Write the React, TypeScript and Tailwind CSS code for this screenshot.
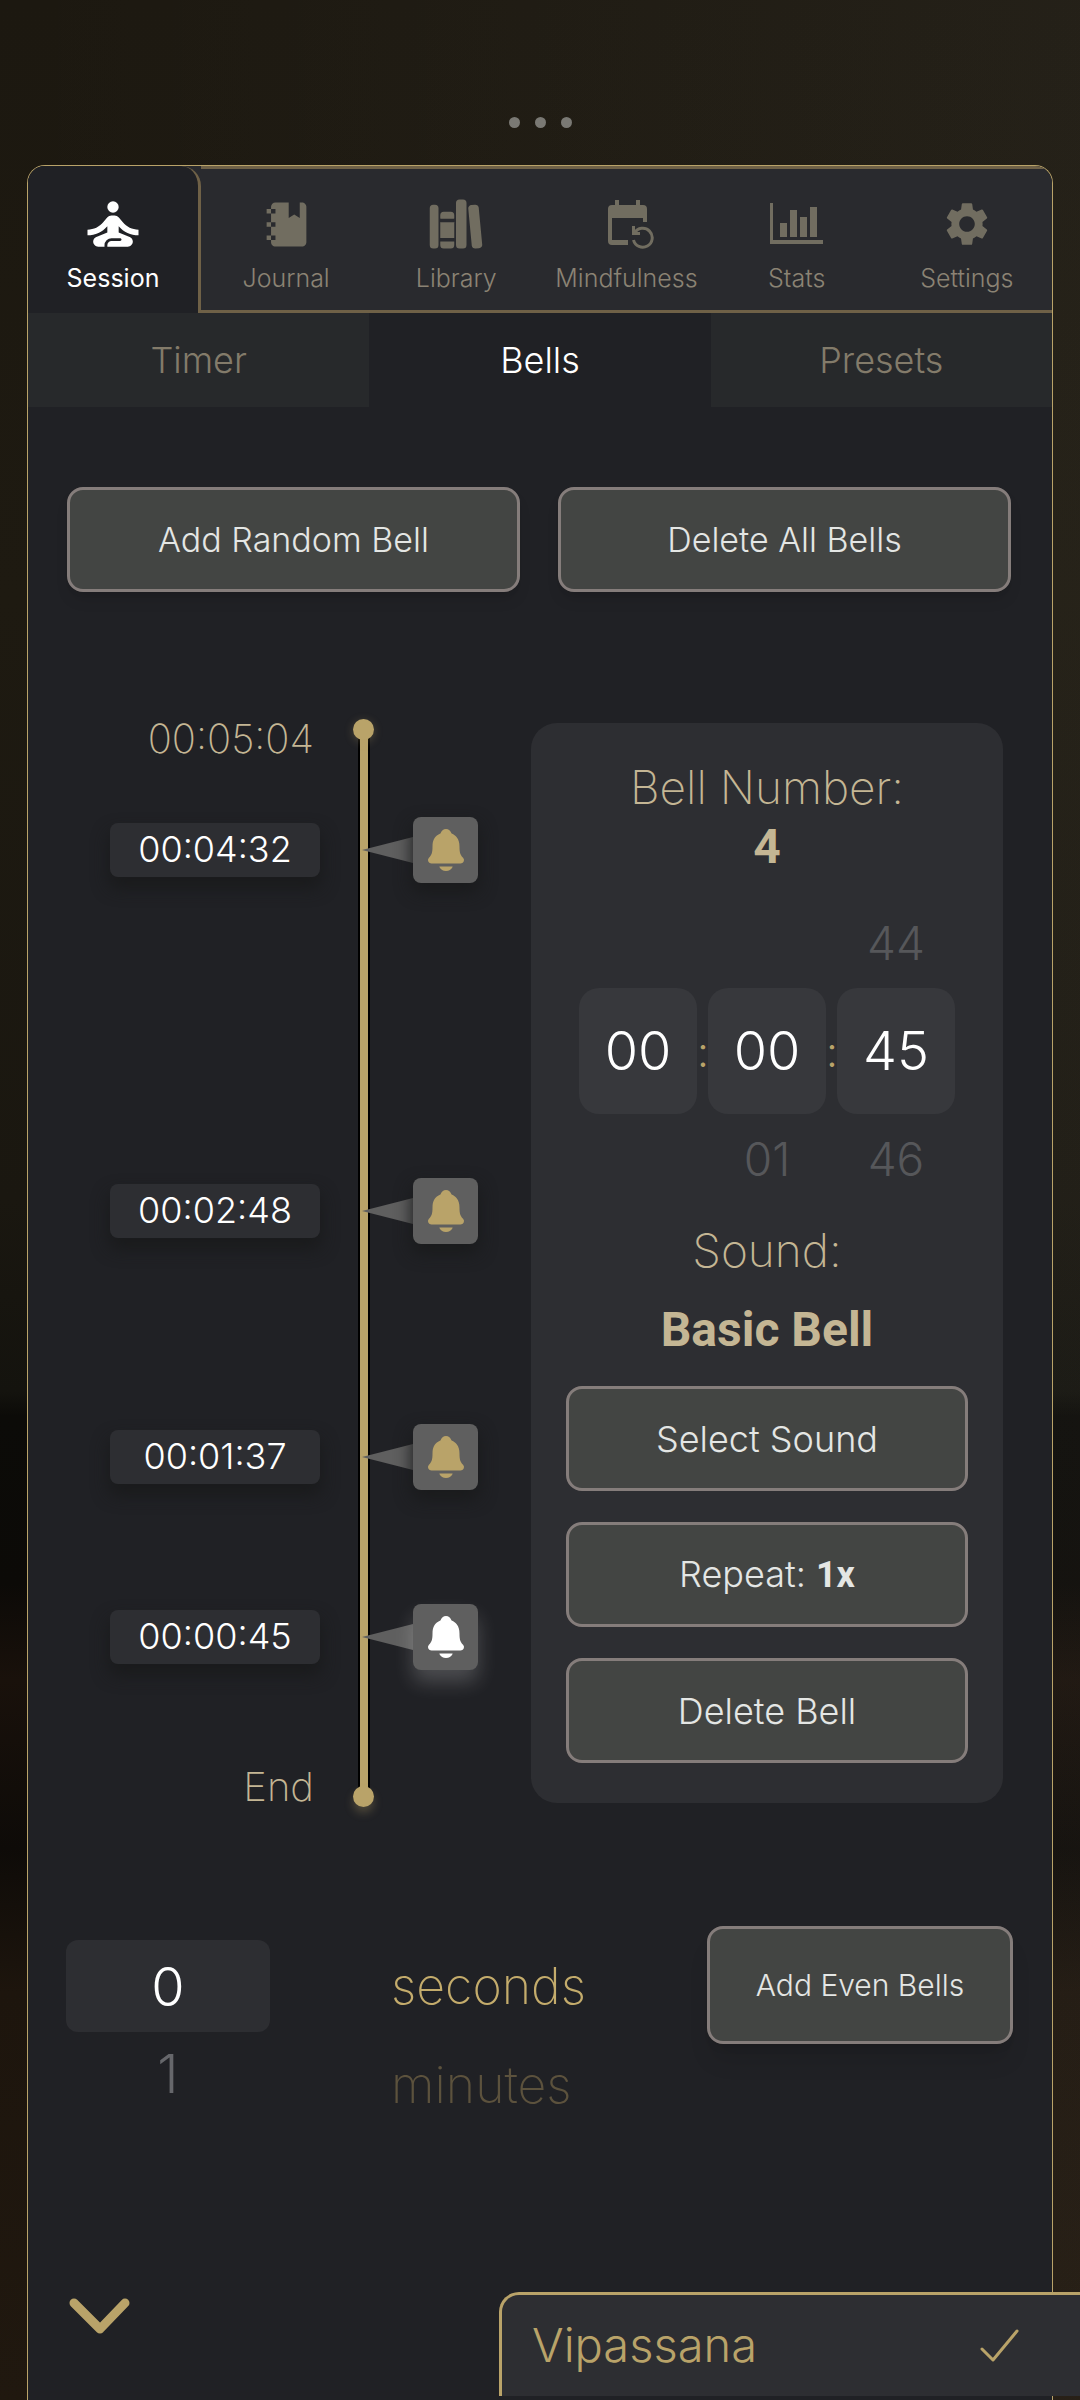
import { useState } from "react";
import { IoLibrary, IoNotifications } from "react-icons/io5";
import { MdSelfImprovement, MdSettings } from "react-icons/md";

function NotebookIcon() {
  return (
    <svg viewBox="0 0 24 24" className="size-[53px]" fill="currentColor">
      <path d="M3,7V5H5V4C5,2.89 5.9,2 7,2H13V9L15.5,7.5L18,9V2H19C20.05,2 21,2.95 21,4V20C21,21.05 20.05,22 19,22H7C5.95,22 5,21.05 5,20V19H3V17H5V13H3V11H5V7H3M7,11H5V13H7V11M7,7V5H5V7H7M7,19V17H5V19H7Z" />
    </svg>
  );
}

function CalendarIcon() {
  return (
    <svg viewBox="-9 -1 55 50" className="h-[50px] w-[55px]" fill="none" stroke="currentColor">
      <path d="M7 0h4v5h17V0h4v5h3a4 4 0 0 1 4 4v13h-4v-4H4v22h16v5H4a4 4 0 0 1-4-4V9a4 4 0 0 1 4-4h3z" fill="currentColor" stroke="none" />
      <path d="M26.5 33A9.5 9.5 0 1 1 25.5 40" strokeWidth="3" />
      <path d="M24 26v9h8v-3h-5v-6z" fill="currentColor" stroke="none" />
    </svg>
  );
}

function ChartIcon() {
  return (
    <svg viewBox="0 0 53 42" className="h-[42px] w-[53px]" fill="currentColor">
      <path d="M0 0h3v37h50v4H0z" />
      <path d="M10 20h7v14h-7zM20 7h7v27h-7zM30 14h7v20h-7zM40 4h7v30h-7z" />
    </svg>
  );
}

const tabs = [
  { name: "Session", icon: <MdSelfImprovement size={68} /> },
  { name: "Journal", icon: <NotebookIcon /> },
  { name: "Library", icon: <IoLibrary size={56} /> },
  { name: "Mindfulness", icon: <CalendarIcon /> },
  { name: "Stats", icon: <ChartIcon /> },
  { name: "Settings", icon: <MdSettings size={52} /> },
];

const subTabs = ["Timer", "Bells", "Presets"];

// seconds left on the clock when each bell rings
const TOTAL = 304;
const PX_PER_SECOND = 3.47;
const MARKER_HEIGHT = 66;
const bells = [272, 168, 97, 45];

const wheels = [
  { label: "hours", prev: "", value: "00", next: "" },
  { label: "minutes", prev: "", value: "00", next: "01" },
  { label: "seconds", prev: "44", value: "45", next: "46" },
];

function formatTime(seconds: number) {
  const parts = [Math.floor(seconds / 3600), Math.floor(seconds / 60) % 60, seconds % 60];
  return parts.map((p) => String(p).padStart(2, "0")).join(":");
}

function PanelButton({ children, className = "" }: { children: React.ReactNode; className?: string }) {
  return (
    <button
      type="button"
      className={`rounded-2xl border-3 border-[#857d7b] bg-[#434543] font-light text-[#e4e6e4] ${className}`}
    >
      {children}
    </button>
  );
}

function MainNav() {
  const [active, setActive] = useState("Session");
  return (
    <nav className="grid h-[147px] grid-cols-[173px_repeat(5,1fr)] overflow-hidden rounded-t-[17px] bg-[#292a2e]">
      {tabs.map((tab) => (
        <button
          key={tab.name}
          type="button"
          onClick={() => setActive(tab.name)}
          className={
            tab.name === active
              ? "flex flex-col items-center rounded-tr-[20px] border-r-3 border-[#6f6147] bg-[#202125] pt-6 text-white"
              : "flex flex-col items-center border-y-3 border-[#6f6147] pt-[21px] text-[#716d60]"
          }
        >
          <span className="flex h-[68px] items-center">{tab.icon}</span>
          <span className={tab.name === active ? "text-[25px] leading-10" : "text-[25px] leading-10 font-light text-[#8b8374]"}>
            {tab.name}
          </span>
        </button>
      ))}
    </nav>
  );
}

function Timeline() {
  return (
    <div className="relative flex w-[411px] flex-col">
      {/* the session line with its two end points */}
      <div className="absolute inset-y-0 left-[285px] flex w-[21px] flex-col items-center">
        <span className="z-10 size-[21px] rounded-full bg-[#b9a369] shadow-[0_2px_10px_rgba(185,163,105,0.3)]" />
        <span className="-my-1 w-2 flex-1 bg-[#b9a369] shadow-[0_0_0_2px_#000]" />
        <span className="z-10 size-[21px] rounded-full bg-[#b9a369] shadow-[0_6px_10px_rgba(185,163,105,0.3)]" />
      </div>
      <p className="-mb-10 w-[246px] text-right text-[40px] leading-10 font-extralight text-[#c4b694]">
        {formatTime(TOTAL)}
      </p>
      <ul className="relative z-10 pt-5">
        {bells.map((seconds, i) => {
          const selected = i === bells.length - 1;
          const before = i === 0 ? TOTAL : bells[i - 1];
          const gap = (before - seconds) * PX_PER_SECOND - (i === 0 ? MARKER_HEIGHT / 2 : MARKER_HEIGHT);
          return (
            <li key={seconds} className="flex h-[66px] items-center" style={{ marginTop: Math.round(gap) }}>
              <span className="ml-[42px] h-[54px] w-[210px] rounded-lg bg-[#2d2e32] text-center text-4xl leading-[52px] font-light text-white shadow-[0_10px_16px_2px_rgba(26,27,28,0.9)]">
                {formatTime(seconds)}
              </span>
              <svg viewBox="0 0 51 26" className="ml-[42px] h-[26px] w-[51px]">
                <path d="M0 13 51 0v26z" fill="#5f5f5f" />
              </svg>
              <button
                type="button"
                aria-label={`Bell at ${formatTime(seconds)}`}
                className={
                  selected
                    ? "flex h-[66px] w-[65px] items-center justify-center rounded-lg bg-[#5f5f5f] text-white shadow-[0_12px_20px_0_rgba(255,255,255,0.2)]"
                    : "flex h-[66px] w-[65px] items-center justify-center rounded-lg bg-[#5f5f5f] text-[#b9a369] shadow-[0_8px_16px_2px_rgba(26,27,28,0.9)]"
                }
              >
                <IoNotifications size={48} />
              </button>
            </li>
          );
        })}
      </ul>
      <p className="mt-auto w-[246px] text-right text-[40px] leading-10 font-extralight text-[#c4b694]">End</p>
    </div>
  );
}

function BellEditor() {
  return (
    <section className="my-1 flex w-[472px] flex-col items-center rounded-[26px] bg-[#2d2e32] px-[35px] py-10">
      <h2 className="flex flex-col items-center text-[46px] leading-12 font-extralight text-[#c4b694]">
        Bell Number:
        <strong className="mt-2 font-[Roboto] text-5xl leading-14 font-bold">4</strong>
      </h2>
      <div className="mt-11 flex items-center">
        {wheels.map((wheel, i) => (
          <div key={wheel.label} className="flex items-center">
            {i > 0 && <span className="w-[11px] text-center text-[42px] font-light text-[#b9a369]">:</span>}
            <div className="flex w-[118px] flex-col items-center text-[46px] leading-12 font-light text-[#56575a]">
              <span className="h-12">{wheel.prev}</span>
              <span
                role="spinbutton"
                aria-label={wheel.label}
                aria-valuenow={Number(wheel.value)}
                className="my-[21px] flex h-[126px] w-full items-center justify-center rounded-[20px] bg-[#37383c] text-[54px] text-white"
              >
                {wheel.value}
              </span>
              <span className="h-12">{wheel.next}</span>
            </div>
          </div>
        ))}
      </div>
      <h3 className="mt-[43px] flex flex-col items-center text-[46px] leading-12 font-extralight text-[#c4b694]">
        Sound:
        <strong className="mt-7 font-[Roboto] text-5xl leading-14 font-bold">Basic Bell</strong>
      </h3>
      <div className="mt-7 flex w-full flex-col gap-[31px]">
        <PanelButton className="h-[105px] text-[36px]">Select Sound</PanelButton>
        <PanelButton className="h-[105px] text-[36px]">
          Repeat: <strong className="font-[Roboto] font-bold">1x</strong>
        </PanelButton>
        <PanelButton className="h-[105px] text-[36px]">Delete Bell</PanelButton>
      </div>
    </section>
  );
}

export default function App() {
  const [subTab, setSubTab] = useState("Bells");
  return (
    <div className="relative flex min-h-screen flex-col overflow-hidden bg-[linear-gradient(90deg,rgba(240,240,225,0)_0%,rgba(240,240,225,0.04)_100%),linear-gradient(180deg,#1c1810_0%,#1e1a11_25%,#1a1710_50%,#14130e_58%,#0c0b08_59%,#0c0a07_66%,#19110b_70%,#0e0b08_77%,#1d150d_83%,#20180f_100%)] font-[Inter,sans-serif]">
      <div className="flex h-[165px] items-end justify-center gap-[15px] pb-[37px]">
        <span className="size-[11px] rounded-full bg-[#7a7974]" />
        <span className="size-[11px] rounded-full bg-[#7a7974]" />
        <span className="size-[11px] rounded-full bg-[#7a7974]" />
      </div>

      <main className="mx-[27px] flex flex-1 flex-col rounded-t-[18px] border border-b-0 border-[#b9a369] bg-[#202125]">
        <MainNav />
        <div className="grid h-[94px] grid-cols-3">
          {subTabs.map((name) => (
            <button
              key={name}
              type="button"
              onClick={() => setSubTab(name)}
              className={
                name === subTab
                  ? "text-[36px] font-light text-white"
                  : "bg-[#27292b] text-[36px] font-light text-[#837b6a]"
              }
            >
              {name}
            </button>
          ))}
        </div>

        <div className="mt-20 grid grid-cols-2 gap-[38px] pr-[41px] pl-[39px]">
          <PanelButton className="h-[105px] text-[34px] shadow-lg">Add Random Bell</PanelButton>
          <PanelButton className="h-[105px] text-[34px] shadow-lg">Delete All Bells</PanelButton>
        </div>

        <div className="mt-[127px] flex justify-between pr-[49px] pl-10">
          <Timeline />
          <BellEditor />
        </div>

        <div className="mt-[119px] flex items-start justify-between pr-[39px] pl-[38px]">
          <div className="mt-3.5 flex w-[204px] flex-col items-center text-[54px] font-light">
            <span
              role="spinbutton"
              aria-label="Interval"
              aria-valuenow={0}
              className="flex h-[92px] w-full items-center justify-center rounded-xl bg-[#2d2e32] text-white"
            >
              0
            </span>
            <span className="leading-[84px] text-[#66676b]">1</span>
          </div>
          <div className="mt-3.5 flex flex-col text-[50px] font-extralight">
            <span className="leading-[92px] text-[#c4ac6c]">seconds</span>
            <span className="leading-[106px] text-[#5c523d]">minutes</span>
          </div>
          <PanelButton className="h-[118px] w-[306px] text-[30px] shadow-xl">Add Even Bells</PanelButton>
        </div>

        <button type="button" aria-label="Collapse" className="mt-auto mb-11 ml-9 size-20 text-[#b9a369]">
          <svg viewBox="0 0 80 80" className="size-20" fill="none" stroke="currentColor">
            <path d="M10 27 36 53 61 27" strokeWidth="9" strokeLinecap="round" strokeLinejoin="round" />
          </svg>
        </button>
      </main>

      {/* preset drawer, runs off the right edge */}
      <button
        type="button"
        className="absolute right-0 bottom-1 flex h-[104px] w-[581px] items-center justify-between rounded-tl-[20px] border-t-3 border-l-3 border-[#b9a369] bg-[#2d2e32] pr-[60px] pl-[30px] text-[47px] font-light text-[#b9a369]"
      >
        Vipassana
        <svg viewBox="0 0 40 34" className="h-[34px] w-10" fill="none" stroke="currentColor">
          <path d="M2 20 13 31 37 2" strokeWidth="3" strokeLinecap="round" strokeLinejoin="round" />
        </svg>
      </button>
    </div>
  );
}
